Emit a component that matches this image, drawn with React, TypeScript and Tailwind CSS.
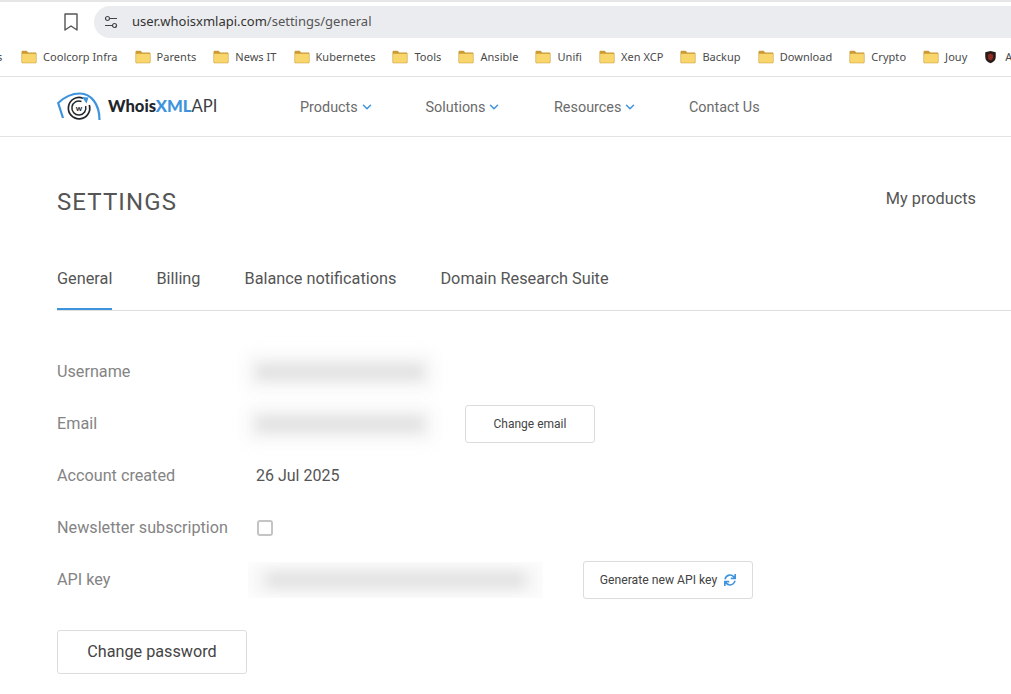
import { ChevronDown } from "lucide-react";
import { FaSync } from "react-icons/fa";

const bookmarks = [
  "Coolcorp Infra",
  "Parents",
  "News IT",
  "Kubernetes",
  "Tools",
  "Ansible",
  "Unifi",
  "Xen XCP",
  "Backup",
  "Download",
  "Crypto",
  "Jouy",
];

const navItems = [
  { label: "Products", width: "w-[125.5px]", menu: true },
  { label: "Solutions", width: "w-[128.5px]", menu: true },
  { label: "Resources", width: "w-[135px]", menu: true },
  { label: "Contact Us", width: "w-auto", menu: false },
];

const tabs = [
  { label: "General", active: true },
  { label: "Billing", active: false },
  { label: "Balance notifications", active: false },
  { label: "Domain Research Suite", active: false },
];

function FolderIcon() {
  return (
    <svg viewBox="0 0 16 14" className="h-[14px] w-4 shrink-0">
      <path d="M0.5 2.2C0.5 1.3 1.1 0.8 1.9 0.8H5.6L7.3 2.5H14.2C15 2.5 15.5 3 15.5 3.8V12C15.5 12.8 15 13.3 14.2 13.3H1.8C1 13.3 0.5 12.8 0.5 12Z" fill="#c99a35" />
      <path d="M1.1 4.6C1.1 4.1 1.4 3.8 1.9 3.8H14.1C14.6 3.8 14.9 4.1 14.9 4.6V12C14.9 12.5 14.6 12.8 14.1 12.8H1.9C1.4 12.8 1.1 12.5 1.1 12Z" fill="#f9d66c" />
    </svg>
  );
}

function BookmarkBar() {
  return (
    <div className="flex h-[38px] items-center overflow-hidden whitespace-nowrap pl-[21px] font-['Noto_Sans',sans-serif] text-[11px] tracking-[0.04px] text-[#4a4a4a]">
      <span className="absolute left-[-3px]">s</span>
      {bookmarks.map((name) => (
        <div key={name} className="mr-[17px] flex items-center gap-[6px]">
          <FolderIcon />
          <span>{name}</span>
        </div>
      ))}
      <svg viewBox="0 0 14 16" className="h-[14px] w-[13px] shrink-0">
        <path d="M1 2.5 7 1l6 1.5V8c0 3.6-2.6 6-6 7-3.4-1-6-3.4-6-7Z" fill="#2a1a1a" />
        <path d="M4 5.5 7 4l3 1.5V8c0 2-1.4 3.4-3 4-1.6-.6-3-2-3-4Z" fill="#8e2a22" />
      </svg>
      <span className="ml-[8px]">A</span>
    </div>
  );
}

function Logo() {
  return (
    <div className="flex items-center">
      <svg viewBox="0 0 46 30" className="h-[30px] w-[46px]" fill="none">
        <path d="M7 26 2.2 11Q12 1.5 24 1.5C35 1.5 43.5 12 43.5 28" stroke="#3d93dc" strokeWidth="2.2" />
        <path d="M27 6.2A10.7 10.7 0 1 0 33.3 13" stroke="#22262c" strokeWidth="1.7" />
        <path d="M25.5 9.5A7 7 0 1 0 29.6 14" stroke="#22262c" strokeWidth="1.5" />
        <path d="M26 5 32.5 5.5 30.5 11.5Z" fill="#3d93dc" />
        <text x="23" y="19" textAnchor="middle" fontSize="8" fontWeight="900" fill="#22262c" fontFamily="Lato, sans-serif">w</text>
      </svg>
      <div className="ml-[6px] whitespace-nowrap font-['Lato',sans-serif] text-[16.6px] leading-none text-[#22262c]">
        <span className="font-black">Whois</span>
        <span className="font-black text-[#3d93dc]">XML</span>
        <span className="text-[#3a3f45]">API</span>
      </div>
    </div>
  );
}

function Redacted({ className }: { className: string }) {
  return (
    <div className={`flex items-center justify-center ${className}`}>
      <div className="flex h-[38px] w-full items-center justify-center bg-[#f8f8f8] blur-[7px]">
        <div className="h-[16px] w-[88%] bg-[#e0e0e0]" />
      </div>
    </div>
  );
}

function Row({ label, children }: { label: string; children: React.ReactNode }) {
  return (
    <div className="flex h-[52px] items-center">
      <div className="w-[200px] shrink-0 text-[16.2px] text-[#848484]">{label}</div>
      {children}
    </div>
  );
}

export default function App() {
  return (
    <div className="relative h-[694px] w-[1011px] overflow-hidden bg-white font-['Roboto',sans-serif]">
      <div className="h-[2px] bg-[#e6e6e6]" />
      <div className="flex h-9 items-start pt-1">
        <svg viewBox="0 0 14 18" className="ml-[64px] mt-[7px] h-[18px] w-[14px]" fill="none" stroke="#555" strokeWidth="1.4">
          <path d="M1 1h12v16l-6-4-6 4Z" strokeLinejoin="round" />
        </svg>
        <div className="ml-4 flex h-8 flex-1 items-center rounded-l-2xl bg-[#ebecef] pl-[10px] font-['Noto_Sans',sans-serif] text-[13px] text-[#333]">
          <svg viewBox="0 0 14 14" className="h-[14px] w-[14px]" fill="none" stroke="#444" strokeWidth="1.2">
            <circle cx="3.5" cy="3.5" r="2" />
            <path d="M6 3.5h7M1 10.5h7" />
            <circle cx="10.5" cy="10.5" r="2" />
          </svg>
          <span className="ml-[14px]">
            user.whoisxmlapi.com<span className="text-[#555]">/settings/general</span>
          </span>
        </div>
      </div>

      <BookmarkBar />

      <header className="flex h-[61px] items-center border-y border-[#e2e2e2] pl-[56px]">
        <div className="w-[244px] shrink-0">
          <Logo />
        </div>
        <nav className="flex items-center pt-[2px] text-[14.4px] text-[#6b6b6b]">
          {navItems.map((item) => (
            <div key={item.label} className={`flex items-center gap-[2px] ${item.width}`}>
              {item.label}
              {item.menu && <ChevronDown className="h-[14px] w-[14px] text-[#3d93dc]" strokeWidth={2.5} />}
            </div>
          ))}
        </nav>
      </header>

      <main className="px-[57px]">
        <div className="flex items-start justify-between pt-[49px]">
          <h1 className="text-[24px] leading-[32px] tracking-[1.1px] text-[#555]">SETTINGS</h1>
          <a className="-mr-[22px] mt-px text-[16.3px] leading-[24px] text-[#555]">My products</a>
        </div>

        <div className="-mr-[57px] mt-[39px] flex gap-[44px] border-b border-[#dedede] text-[16.3px] text-[#555]">
          {tabs.map((tab) => (
            <div
              key={tab.label}
              className={`h-[53px] pt-[10px] ${tab.active ? "-mb-px border-b-2 border-[#3d93dc]" : ""}`}
            >
              {tab.label}
            </div>
          ))}
        </div>

        <div className="mt-[35px]">
          <Row label="Username">
            <Redacted className="-ml-[12px] h-10 w-[190px]" />
          </Row>
          <Row label="Email">
            <Redacted className="-ml-[12px] h-10 w-[190px]" />
            <button type="button" className="ml-[30px] h-[38px] w-[130px] rounded-[3px] border border-[#dcdcdc] text-[12px] text-[#444]">
              Change email
            </button>
          </Row>
          <Row label="Account created">
            <span className="-ml-px text-[16px] text-[#555]">26 Jul 2025</span>
          </Row>
          <Row label="Newsletter subscription">
            <span className="h-4 w-4 rounded-[3px] border-2 border-[#c4c4c4]" />
          </Row>
          <Row label="API key">
            <Redacted className="-ml-[9px] h-9 w-[295px] overflow-hidden" />
            <button type="button" className="ml-[40px] flex h-[38px] w-[170px] items-center justify-center gap-[7px] rounded-[3px] border border-[#dcdcdc] text-[12.2px] text-[#444]">
              Generate new API key
              <FaSync className="h-[12px] w-[12px] text-[#3d93dc]" />
            </button>
          </Row>
        </div>

        <button type="button" className="mt-[24px] h-11 w-[190px] rounded-[3px] border border-[#dcdcdc] text-[16.2px] text-[#444]">
          Change password
        </button>
      </main>
    </div>
  );
}
